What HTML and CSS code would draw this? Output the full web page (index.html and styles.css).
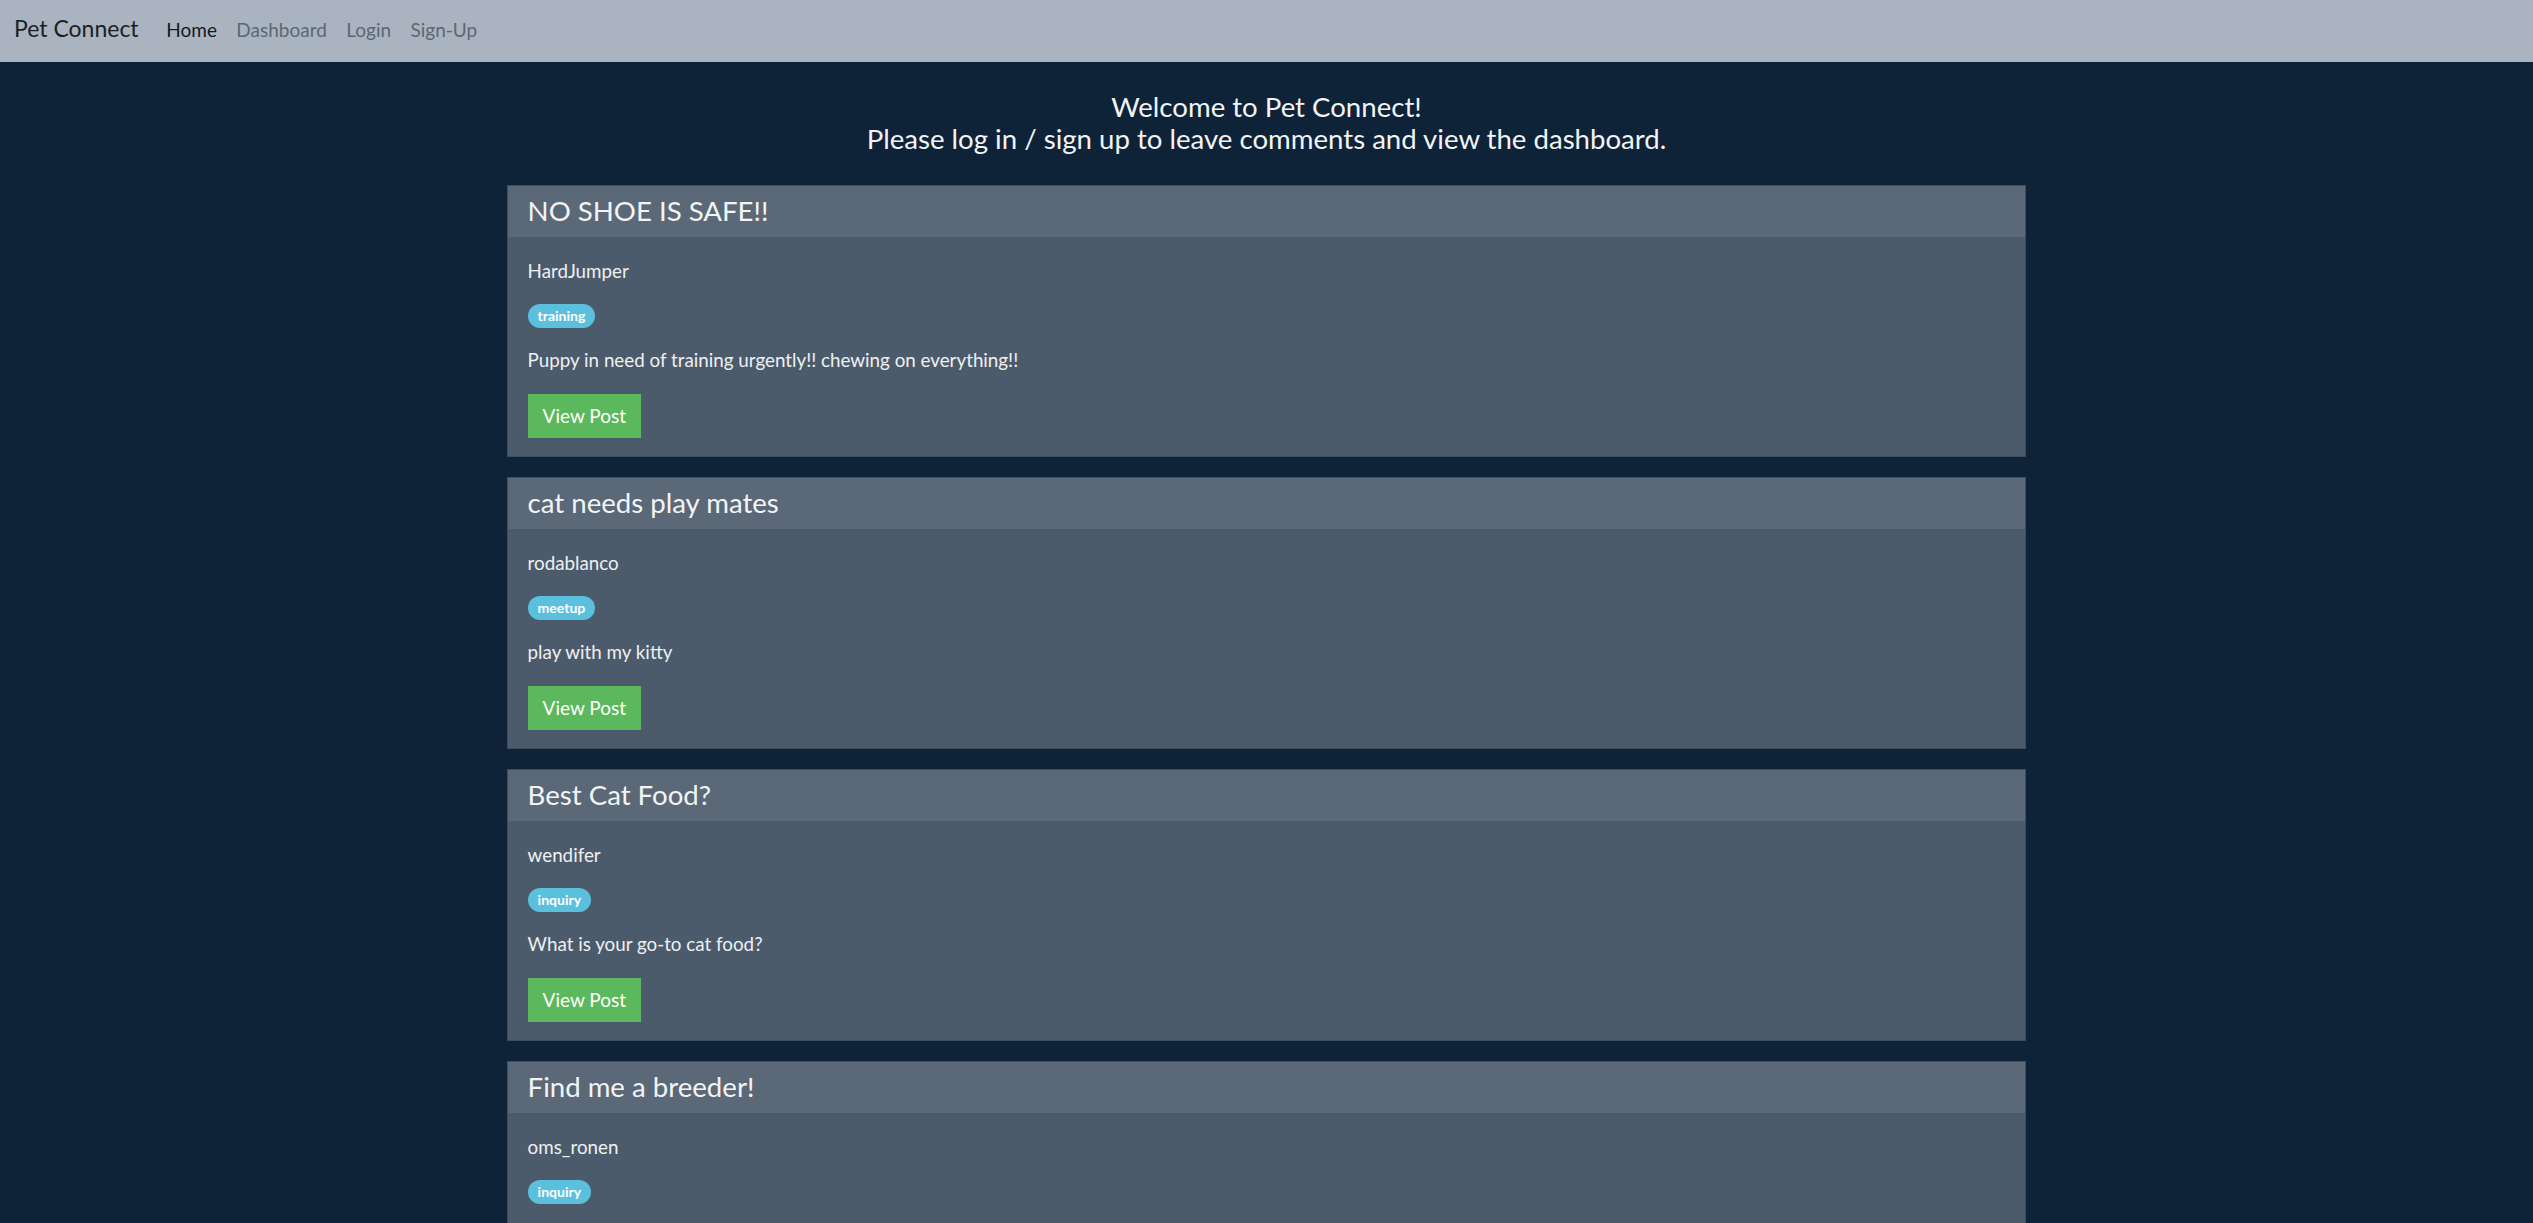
FILE: index.html
```html
<!DOCTYPE html>
<html lang="en">
<head>
<meta charset="utf-8">
<title>Pet Connect</title>
<link rel="stylesheet" href="styles.css">
</head>
<body>
<nav class="navbar">
  <a class="brand" href="#">Pet Connect</a>
  <ul class="nav-links">
    <li><a class="nav-link active" href="#">Home</a></li>
    <li><a class="nav-link" href="#">Dashboard</a></li>
    <li><a class="nav-link" href="#">Login</a></li>
    <li><a class="nav-link" href="#">Sign-Up</a></li>
  </ul>
</nav>
<main class="main">
  <h1 class="welcome">Welcome to Pet Connect!<br>Please log in / sign up to leave comments and view the dashboard.</h1>
  <section class="posts">
    <article class="card">
      <header class="card-header"><h2 class="card-title">NO SHOE IS SAFE!!</h2></header>
      <div class="card-body">
        <p class="author">HardJumper</p>
        <div class="tags"><span class="badge">training</span></div>
        <p class="desc">Puppy in need of training urgently!! chewing on everything!!</p>
        <div class="actions"><a class="btn" href="#">View Post</a></div>
      </div>
    </article>
    <article class="card">
      <header class="card-header"><h2 class="card-title">cat needs play mates</h2></header>
      <div class="card-body">
        <p class="author">rodablanco</p>
        <div class="tags"><span class="badge">meetup</span></div>
        <p class="desc">play with my kitty</p>
        <div class="actions"><a class="btn" href="#">View Post</a></div>
      </div>
    </article>
    <article class="card">
      <header class="card-header"><h2 class="card-title">Best Cat Food?</h2></header>
      <div class="card-body">
        <p class="author">wendifer</p>
        <div class="tags"><span class="badge">inquiry</span></div>
        <p class="desc">What is your go-to cat food?</p>
        <div class="actions"><a class="btn" href="#">View Post</a></div>
      </div>
    </article>
    <article class="card">
      <header class="card-header"><h2 class="card-title">Find me a breeder!</h2></header>
      <div class="card-body">
        <p class="author">oms_ronen</p>
        <div class="tags"><span class="badge">inquiry</span></div>
        <p class="desc">Looking for a reputable breeder near me.</p>
        <div class="actions"><a class="btn" href="#">View Post</a></div>
      </div>
    </article>
  </section>
</main>
</body>
</html>
```
FILE: styles.css
```css
* { box-sizing: border-box; }
html, body { margin: 0; padding: 0; }
body {
  background: #0f2338;
  font-family: Lato, "Open Sans", sans-serif;
  color: #eef0f2;
}
a { text-decoration: none; }

.navbar {
  height: 62px;
  background: #aab4c1;
  display: flex;
  align-items: baseline;
  padding: 15px 0 0 14px;
}
.brand {
  font-size: 23px;
  line-height: 27px;
  color: #1b1f24;
}
.nav-links {
  list-style: none;
  margin: 0 0 0 18px;
  padding: 0;
  display: flex;
}
.nav-link {
  display: block;
  font-size: 19px;
  line-height: 22px;
  padding: 0 9.7px;
  color: #5d6773;
}
.nav-link.active { color: #15191e; }

.main {
  padding: 29px 0 40px;
}
.welcome {
  margin: 0 0 30px;
  text-align: center;
  font-size: 27.6px;
  line-height: 32px;
  font-weight: 400;
  color: #f2f4f6;
}
.posts {
  width: 60%;
  margin: 0 auto;
  display: flex;
  flex-direction: column;
  gap: 20px;
}
.card {
  border: 1px solid #3e4c5c;
  background: #4c5b6b;
}
.card-header {
  background: #5b6877;
  padding: 7px 20px 9px;
}
.card-title {
  margin: 0;
  font-size: 27.6px;
  line-height: 35px;
  font-weight: 400;
  color: #f2f4f6;
}
.card-body {
  padding: 20px 20px 18px;
  display: flex;
  flex-direction: column;
  align-items: flex-start;
  font-size: 18.8px;
  line-height: 28px;
}
.author { margin: 0 0 19px; }
.tags { display: flex; }
.badge {
  display: inline-block;
  height: 24px;
  line-height: 24px;
  padding: 0 10px;
  border-radius: 12px;
  background: #5bc0de;
  color: #fff;
  font-size: 14px;
  font-weight: 700;
}
.desc { margin: 18px 0 20px; }
.btn {
  display: inline-block;
  height: 44px;
  line-height: 44px;
  padding: 0 15px;
  background: #5cb85c;
  color: #fff;
  font-size: 19px;
}
```
